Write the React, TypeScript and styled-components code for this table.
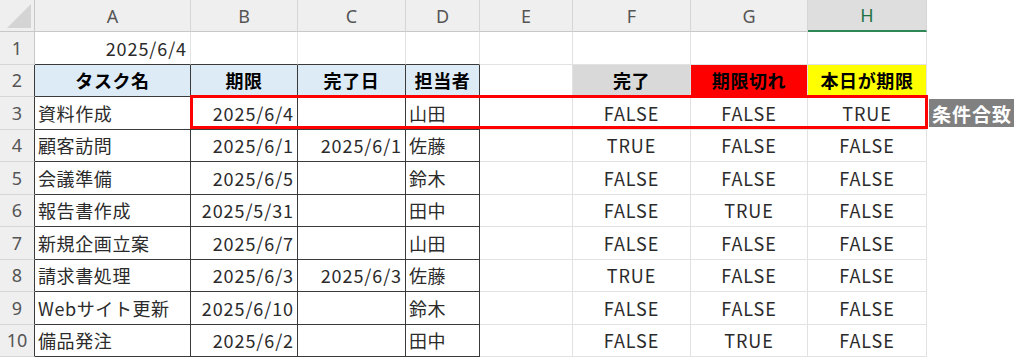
import React from "react";
import styled, { createGlobalStyle } from "styled-components";

const GlobalStyle = createGlobalStyle`
  html, body {
    margin: 0;
    background: #ffffff;
  }
  body {
    font-family: "Noto Sans CJK JP", "Noto Sans", sans-serif;
    color: #262626;
  }
`;

const COLS = ["A", "B", "C", "D", "E", "F", "G", "H"];
const GRID = "#e2e2e2";
const INK = "#3a3a3a";

type Fill = "blue" | "gray" | "red" | "yellow";
const fills: Record<Fill, string> = {
  blue: "#ddebf7",
  gray: "#d9d9d9",
  red: "#ff0000",
  yellow: "#ffff00",
};

const Wrap = styled.div`
  position: relative;
  width: 1024px;
  height: 359px;
  overflow: hidden;
`;

const Sheet = styled.div`
  display: grid;
  grid-template-columns: 35px 156px 107px 108px 74px 93px 118px 117px 119px 1fr;
  grid-template-rows: 32px repeat(10, 32.5px);
`;

const Corner = styled.div`
  position: relative;
  background: #efefef;
  border-right: 1px solid #c8c8c8;
  border-bottom: 1px solid #c8c8c8;
  box-sizing: border-box;
  &::after {
    content: "";
    position: absolute;
    right: 3px;
    bottom: 3px;
    border-style: solid;
    border-width: 0 0 24px 24px;
    border-color: transparent transparent #d4d4d4 transparent;
  }
`;

const ColHead = styled.div<{ $active?: boolean }>`
  box-sizing: border-box;
  display: flex;
  align-items: center;
  justify-content: center;
  font-family: "Noto Sans", sans-serif;
  font-size: 18px;
  color: ${(p) => (p.$active ? "#217346" : "#555555")};
  background: ${(p) => (p.$active ? "#dedede" : "#efefef")};
  border-right: 1px solid #d6d6d6;
  border-bottom: ${(p) => (p.$active ? "2px solid #2f8756" : "1px solid #c8c8c8")};
`;

const RowHead = styled.div<{ $edge?: boolean }>`
  box-sizing: border-box;
  display: flex;
  align-items: center;
  justify-content: center;
  font-family: "Noto Sans", sans-serif;
  font-size: 18px;
  color: #555555;
  background: #efefef;
  border-bottom: 1px solid #d6d6d6;
  border-right: 1px solid ${(p) => (p.$edge ? INK : "#c8c8c8")};
`;

const Cell = styled.div<{
  $align: "left" | "right" | "center";
  $fill?: Fill;
  $bold?: boolean;
  $right: string;
  $bottom: string;
}>`
  box-sizing: border-box;
  display: flex;
  align-items: center;
  justify-content: ${(p) =>
    p.$align === "left" ? "flex-start" : p.$align === "right" ? "flex-end" : "center"};
  padding: 0 3px;
  font-size: 18px;
  letter-spacing: 0.6px;
  font-weight: ${(p) => (p.$bold ? 700 : 400)};
  color: ${(p) => (p.$bold ? "#000000" : "#2b2b2b")};
  background: ${(p) => (p.$fill ? fills[p.$fill] : "#ffffff")};
  border-right: 1px solid ${(p) => p.$right};
  border-bottom: 1px solid ${(p) => p.$bottom};
  white-space: nowrap;
  overflow: visible;
`;

const Num = styled.span`
  letter-spacing: 0.9px;
`;

const Blank = styled.div``;

const Highlight = styled.div`
  position: absolute;
  left: 190px;
  top: 95px;
  width: 738px;
  height: 34px;
  box-sizing: border-box;
  border: 3px solid #ff0000;
  pointer-events: none;
`;

const Badge = styled.div`
  align-self: center;
  justify-self: start;
  margin-left: 2px;
  padding: 0 2px 0 3px;
  height: 28px;
  display: flex;
  align-items: center;
  background: #808080;
  color: #ffffff;
  font-weight: 700;
  font-size: 19px;
  letter-spacing: 1px;
`;

type Row = [string, string, string, string, boolean, boolean, boolean];

const tasks: Row[] = [
  ["資料作成", "2025/6/4", "", "山田", false, false, true],
  ["顧客訪問", "2025/6/1", "2025/6/1", "佐藤", true, false, false],
  ["会議準備", "2025/6/5", "", "鈴木", false, false, false],
  ["報告書作成", "2025/5/31", "", "田中", false, true, false],
  ["新規企画立案", "2025/6/7", "", "山田", false, false, false],
  ["請求書処理", "2025/6/3", "2025/6/3", "佐藤", true, false, false],
  ["Webサイト更新", "2025/6/10", "", "鈴木", false, false, false],
  ["備品発注", "2025/6/2", "", "田中", false, true, false],
];

type CellDef = {
  text: React.ReactNode;
  align: "left" | "right" | "center";
  fill?: Fill;
  bold?: boolean;
};

const heads: CellDef[] = [
  { text: "タスク名", align: "center", fill: "blue", bold: true },
  { text: "期限", align: "center", fill: "blue", bold: true },
  { text: "完了日", align: "center", fill: "blue", bold: true },
  { text: "担当者", align: "center", fill: "blue", bold: true },
  { text: "", align: "center" },
  { text: "完了", align: "center", fill: "gray", bold: true },
  { text: "期限切れ", align: "center", fill: "red", bold: true },
  { text: "本日が期限", align: "center", fill: "yellow", bold: true },
];

const flag = (v: boolean) => (v ? "TRUE" : "FALSE");

const sheetRows: CellDef[][] = [
  [
    { text: <Num>2025/6/4</Num>, align: "right" },
    ...Array.from({ length: 7 }, () => ({ text: "", align: "left" as const })),
  ],
  heads,
  ...tasks.map((t) => [
    { text: t[0], align: "left" as const },
    { text: <Num>{t[1]}</Num>, align: "right" as const },
    { text: <Num>{t[2]}</Num>, align: "right" as const },
    { text: t[3], align: "left" as const },
    { text: "", align: "left" as const },
    { text: <Num>{flag(t[4])}</Num>, align: "center" as const },
    { text: <Num>{flag(t[5])}</Num>, align: "center" as const },
    { text: <Num>{flag(t[6])}</Num>, align: "center" as const },
  ]),
];

// table A2:D10 carries black borders, the rest only gridlines
const inTable = (r: number, c: number) => r >= 1 && c <= 3;

const App: React.FC = () => (
  <>
    <GlobalStyle />
    <Wrap>
      <Sheet>
        <Corner />
        {COLS.map((c) => (
          <ColHead key={c} $active={c === "H"}>
            {c}
          </ColHead>
        ))}
        <Blank />
        {sheetRows.map((row, r) => (
          <React.Fragment key={r}>
            <RowHead $edge={r >= 1}>{r + 1}</RowHead>
            {row.map((cell, c) => (
              <Cell
                key={c}
                $align={cell.align}
                $fill={cell.fill}
                $bold={cell.bold}
                $right={inTable(r, c) ? INK : GRID}
                $bottom={inTable(r, c) || inTable(r + 1, c) ? INK : GRID}
              >
                {cell.text}
              </Cell>
            ))}
            {r === 2 ? <Badge>条件合致</Badge> : <Blank />}
          </React.Fragment>
        ))}
      </Sheet>
      <Highlight />
    </Wrap>
  </>
);

export default App;
